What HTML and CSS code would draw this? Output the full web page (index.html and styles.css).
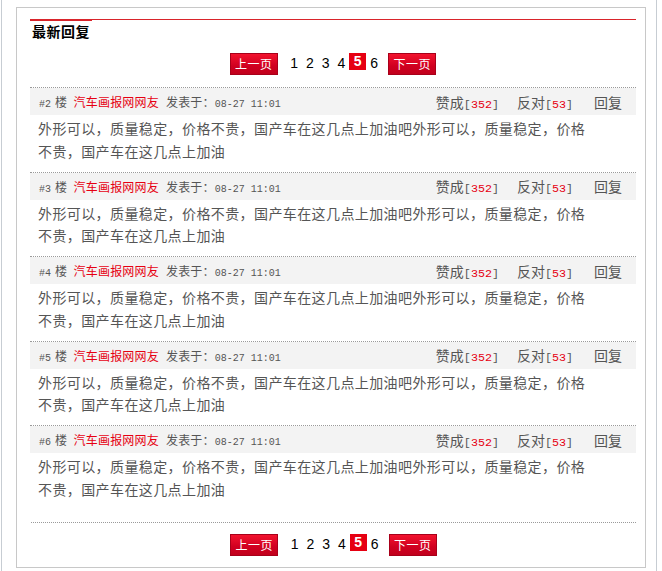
FILE: index.html
```html
<!DOCTYPE html>
<html lang="zh-CN">
<head>
<meta charset="utf-8">
<title>最新回复</title>
<link rel="stylesheet" href="styles.css">
</head>
<body>
<div class="page">
  <div class="box">
    <div class="title"><h2 class="title-text">最新回复</h2></div>

    <div class="pager">
      <a class="pg-btn pg-prev" href="#">上一页</a>
      <a class="pg-num" href="#">1</a>
      <a class="pg-num" href="#">2</a>
      <a class="pg-num" href="#">3</a>
      <a class="pg-num" href="#">4</a>
      <span class="pg-num pg-current">5</span>
      <a class="pg-num" href="#">6</a>
      <a class="pg-btn pg-next" href="#">下一页</a>
    </div>

    <ul class="posts">
      <li class="post">
        <div class="post-head">
          <div class="meta"><span class="mono floor-no">#2</span><span>楼</span><span class="author">汽车画报网网友</span><span class="posted">发表于：</span><span class="mono">08-27 11:01</span></div>
          <div class="actions"><span class="act">赞成<span class="br">[<em>352</em>]</span></span><span class="act">反对<span class="br">[<em>53</em>]</span></span><span class="act">回复</span></div>
        </div>
        <p class="post-body">外形可以，质量稳定，价格不贵，国产车在这几点上加油吧外形可以，质量稳定，价格不贵，国产车在这几点上加油</p>
      </li>
      <li class="post">
        <div class="post-head">
          <div class="meta"><span class="mono floor-no">#3</span><span>楼</span><span class="author">汽车画报网网友</span><span class="posted">发表于：</span><span class="mono">08-27 11:01</span></div>
          <div class="actions"><span class="act">赞成<span class="br">[<em>352</em>]</span></span><span class="act">反对<span class="br">[<em>53</em>]</span></span><span class="act">回复</span></div>
        </div>
        <p class="post-body">外形可以，质量稳定，价格不贵，国产车在这几点上加油吧外形可以，质量稳定，价格不贵，国产车在这几点上加油</p>
      </li>
      <li class="post">
        <div class="post-head">
          <div class="meta"><span class="mono floor-no">#4</span><span>楼</span><span class="author">汽车画报网网友</span><span class="posted">发表于：</span><span class="mono">08-27 11:01</span></div>
          <div class="actions"><span class="act">赞成<span class="br">[<em>352</em>]</span></span><span class="act">反对<span class="br">[<em>53</em>]</span></span><span class="act">回复</span></div>
        </div>
        <p class="post-body">外形可以，质量稳定，价格不贵，国产车在这几点上加油吧外形可以，质量稳定，价格不贵，国产车在这几点上加油</p>
      </li>
      <li class="post">
        <div class="post-head">
          <div class="meta"><span class="mono floor-no">#5</span><span>楼</span><span class="author">汽车画报网网友</span><span class="posted">发表于：</span><span class="mono">08-27 11:01</span></div>
          <div class="actions"><span class="act">赞成<span class="br">[<em>352</em>]</span></span><span class="act">反对<span class="br">[<em>53</em>]</span></span><span class="act">回复</span></div>
        </div>
        <p class="post-body">外形可以，质量稳定，价格不贵，国产车在这几点上加油吧外形可以，质量稳定，价格不贵，国产车在这几点上加油</p>
      </li>
      <li class="post">
        <div class="post-head">
          <div class="meta"><span class="mono floor-no">#6</span><span>楼</span><span class="author">汽车画报网网友</span><span class="posted">发表于：</span><span class="mono">08-27 11:01</span></div>
          <div class="actions"><span class="act">赞成<span class="br">[<em>352</em>]</span></span><span class="act">反对<span class="br">[<em>53</em>]</span></span><span class="act">回复</span></div>
        </div>
        <p class="post-body">外形可以，质量稳定，价格不贵，国产车在这几点上加油吧外形可以，质量稳定，价格不贵，国产车在这几点上加油</p>
      </li>
    </ul>

    <div class="pager pager-bottom">
      <a class="pg-btn pg-prev" href="#">上一页</a>
      <a class="pg-num" href="#">1</a>
      <a class="pg-num" href="#">2</a>
      <a class="pg-num" href="#">3</a>
      <a class="pg-num" href="#">4</a>
      <span class="pg-num pg-current">5</span>
      <a class="pg-num" href="#">6</a>
      <a class="pg-btn pg-next" href="#">下一页</a>
    </div>
  </div>
</div>
</body>
</html>
```

FILE: styles.css
```css
* {
  box-sizing: border-box;
}

html, body {
  margin: 0;
  padding: 0;
  background: #ffffff;
}

body {
  font-family: "Noto Sans CJK SC", "Liberation Sans", sans-serif;
  color: #555555;
}

a {
  text-decoration: none;
}

.page {
  margin-left: 1px;
  width: 656px;
  min-height: 100vh;
  border-left: 1px solid #c7cdd3;
  border-right: 1px solid #c7cdd3;
  padding: 7px 0 4px 14px;
}

.box {
  width: 630px;
  border: 1px solid #c8c8c8;
  padding: 11px 9px 0 13px;
}

/* title */
.title {
  border-top: 1px solid #d9242b;
}

.title-text {
  margin: 0;
  width: 62px;
  border-top: 1px solid #d9242b;
  padding-left: 2px;
  font-size: 14px;
  line-height: 20px;
  font-weight: bold;
  color: #000000;
  letter-spacing: 0.5px;
  white-space: nowrap;
}

/* pager */
.pager {
  margin-top: 12px;
  display: flex;
  justify-content: center;
  align-items: flex-start;
  height: 22px;
}

.pager-bottom {
  margin-top: 0;
  height: auto;
  border-top: 1px dotted #9a9a9a;
  padding: 11px 0 11px;
  margin-left: 1px;
}

.pg-btn {
  display: block;
  width: 48px;
  height: 22px;
  border: 1px solid #a8001a;
  background: linear-gradient(#f2132e, #d00020 60%, #c1001c);
  color: #ffffff;
  font-size: 12px;
  line-height: 20px;
  text-align: center;
  letter-spacing: 0.5px;
}

.pg-prev {
  margin-right: 8.5px;
}

.pg-next {
  margin-left: 6.4px;
}

.pg-num {
  display: block;
  padding: 0 4px;
  font-family: "Liberation Sans", sans-serif;
  font-size: 14px;
  line-height: 21px;
  color: #000000;
}

.pg-current {
  margin-top: 0;
  padding: 0 4.5px;
  height: 17px;
  line-height: 17px;
  background: #e60012;
  color: #ffffff;
  font-weight: bold;
}

/* posts */
.posts {
  list-style: none;
  margin: 12px 0 0;
  padding: 0 0 12.5px;
}

.post {
  border-top: 1px dotted #9a9a9a;
}

.post-head {
  height: 27px;
  background: #f3f3f3;
  display: flex;
  align-items: center;
  justify-content: space-between;
  padding: 0 14px 0 9px;
}

.meta {
  display: flex;
  align-items: baseline;
  font-size: 12px;
  color: #555555;
  white-space: nowrap;
}

.mono {
  font-family: "Liberation Mono", monospace;
  font-size: 10px;
}

.floor-no {
  margin-right: 4px;
}

.author {
  margin-left: 6.5px;
  color: #e60012;
  letter-spacing: 0.2px;
}

.posted {
  margin-left: 7px;
  letter-spacing: 0.2px;
}

.actions {
  display: flex;
  align-items: baseline;
  font-size: 14px;
  color: #555555;
  white-space: nowrap;
}

.act + .act {
  margin-left: 18px;
}

.act:last-child {
  margin-left: 21px;
}

.br {
  font-family: "Liberation Mono", monospace;
  font-size: 11.7px;
}

.br em {
  font-style: normal;
  color: #e60012;
}

.post-body {
  margin: 0;
  padding: 2px 40px 9.5px 8px;
  font-size: 14px;
  line-height: 22.5px;
  letter-spacing: 0.4px;
  color: #555555;
}
```
